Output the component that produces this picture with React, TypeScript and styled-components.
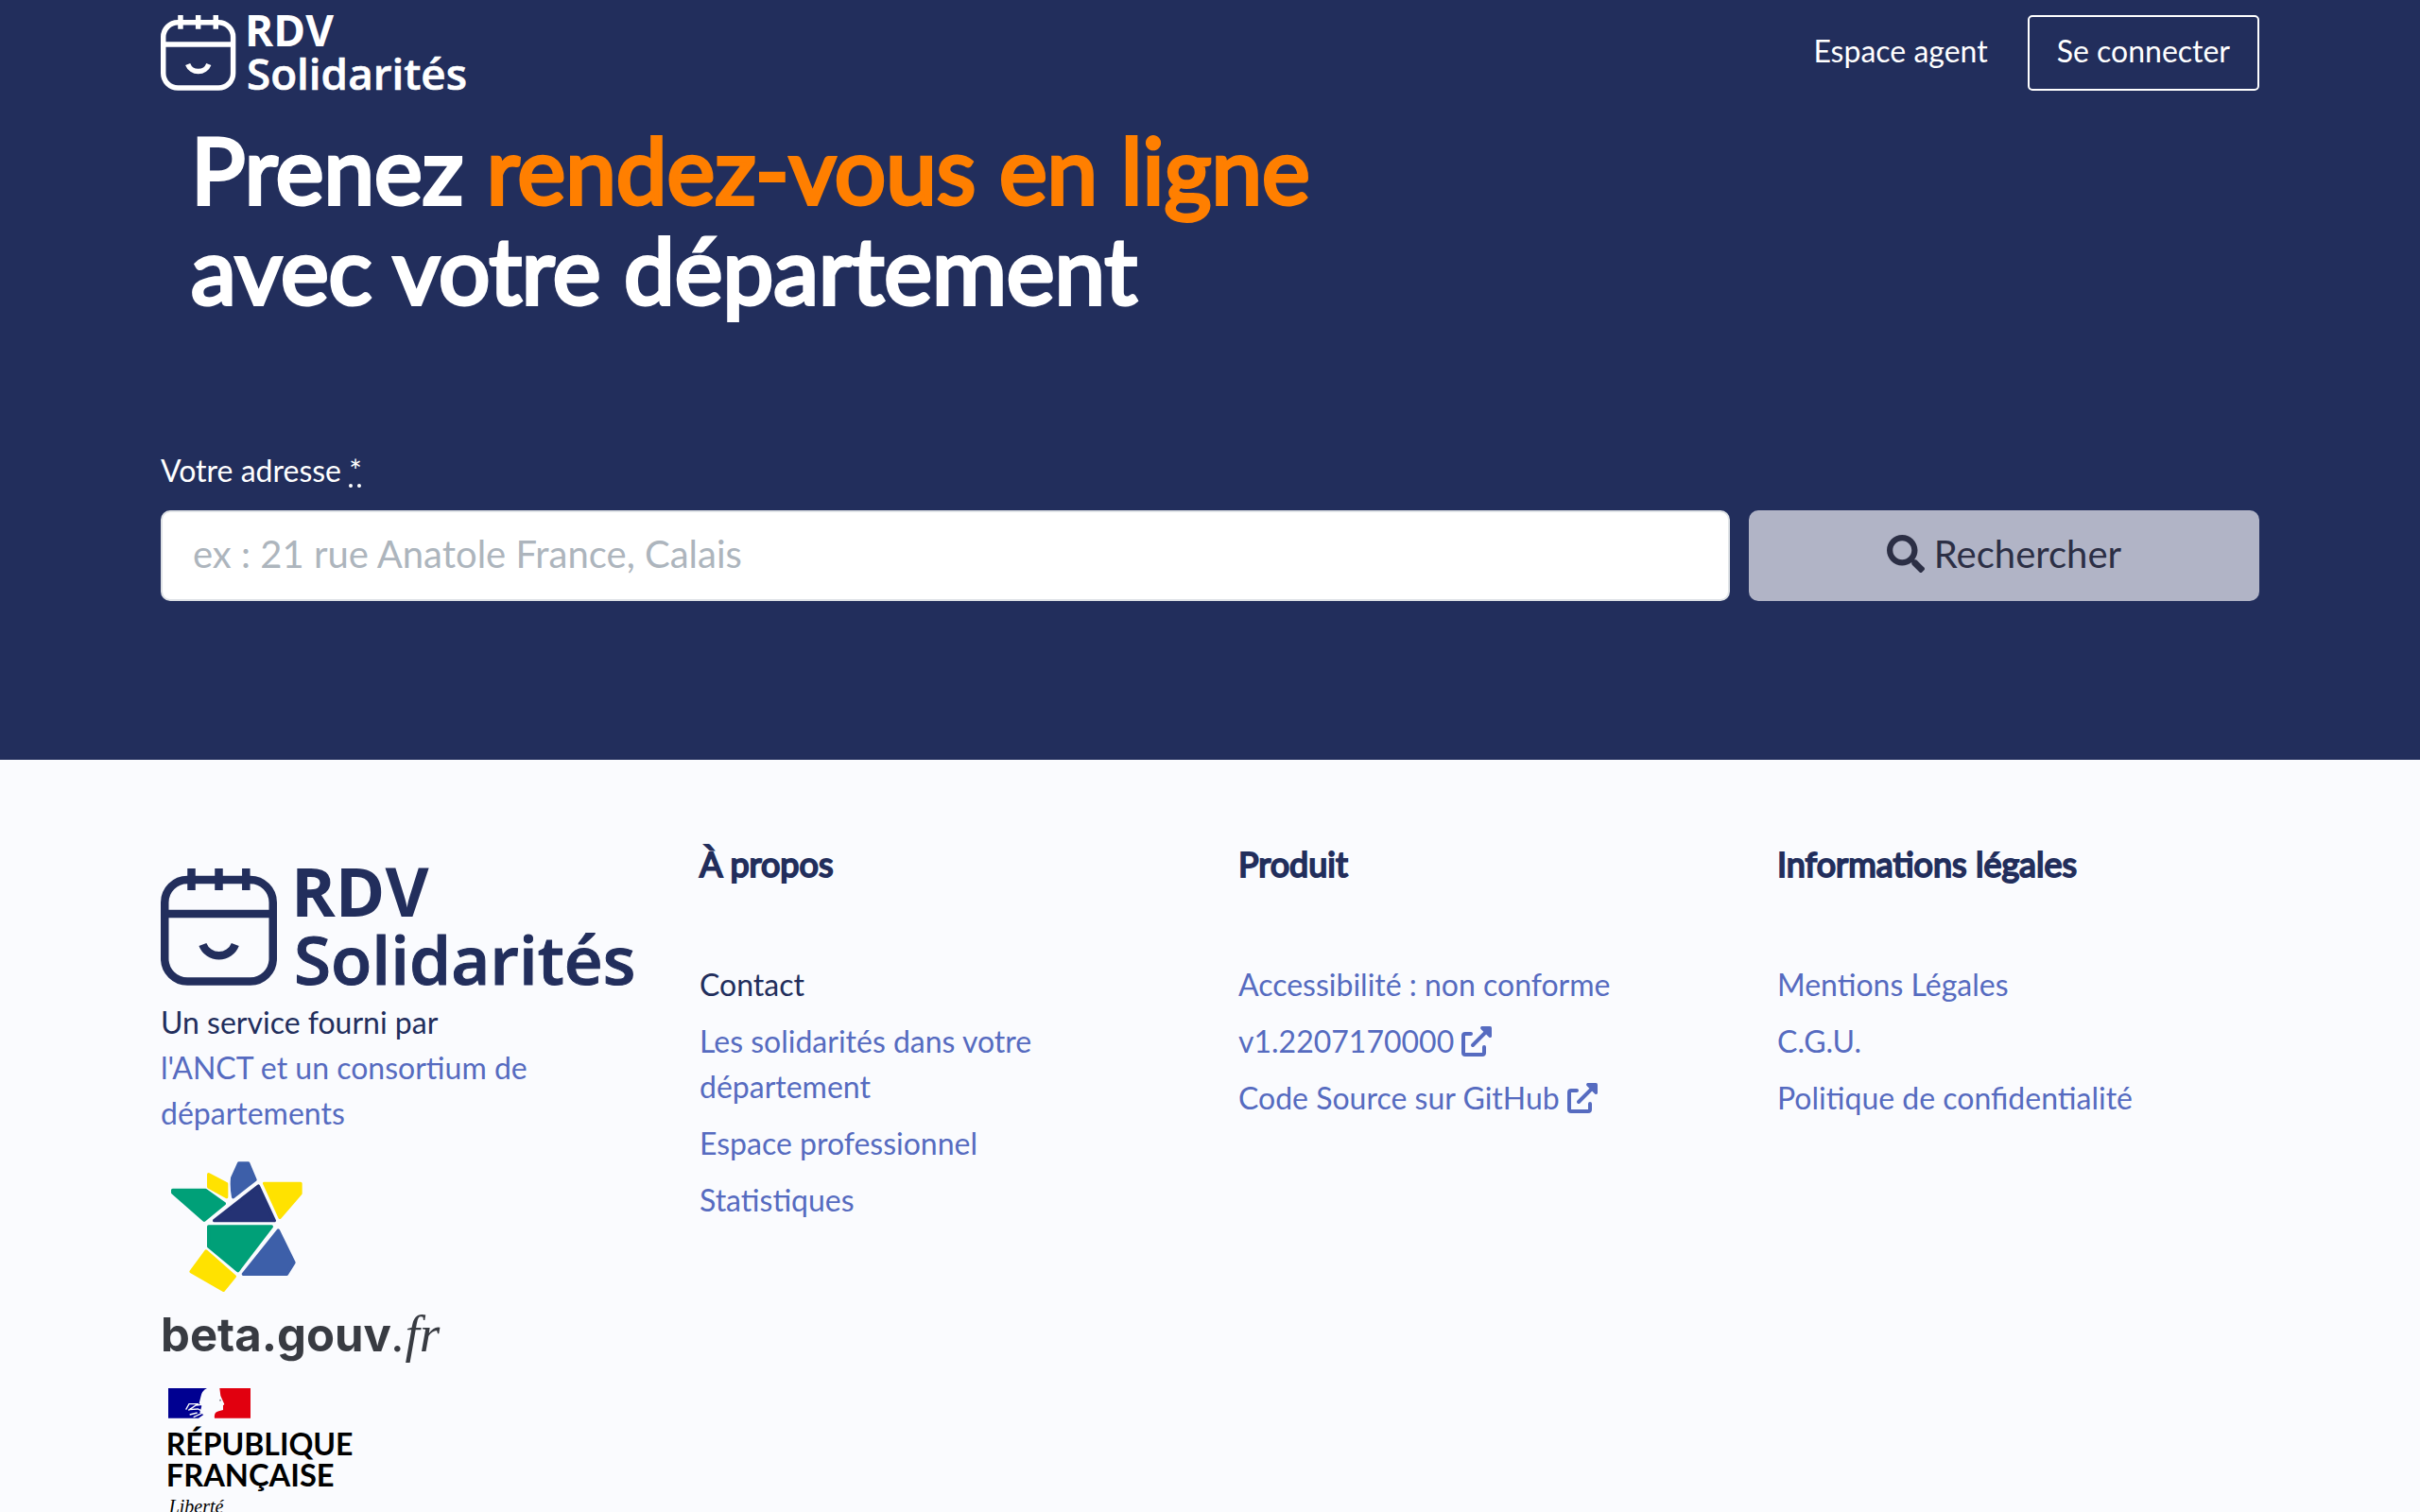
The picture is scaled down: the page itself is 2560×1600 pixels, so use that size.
import React from "react";
import styled, { createGlobalStyle } from "styled-components";
import { FaSearch } from "react-icons/fa";

const navy = "#222e5c";
const link = "#566bc0";

const GlobalStyle = createGlobalStyle`
  *, *::before, *::after { box-sizing: border-box; }
  body {
    margin: 0;
    background: #fafbfe;
    color: ${navy};
    font-family: Lato, "Liberation Sans", sans-serif;
    font-size: 32px;
    line-height: 48px;
  }
  a { color: ${link}; text-decoration: none; }
`;

const Container = styled.div`
  width: 100%;
  max-width: 2280px;
  margin: 0 auto;
  padding: 0 30px;
`;

const Hero = styled.div`
  background: ${navy};
  color: #fff;
  padding-bottom: 168px;
`;

const Navbar = styled.nav`
  display: flex;
  align-items: center;
  justify-content: space-between;
  padding: 16px 0;
`;

const NavLinks = styled.div`
  display: flex;
  align-items: center;
  gap: 42px;
`;

const NavLink = styled.a`
  color: #fff;
  padding-bottom: 4px;
`;

const OutlineLink = styled.a`
  height: 80px;
  padding: 12px 29px;
  border: 2px solid #fff;
  border-radius: 5px;
  color: #fff;
`;

const Title = styled.h1`
  margin: 0;
  padding: 14px 32px 136px;
  font-size: 96px;
  line-height: 106px;
  font-weight: 400;
  -webkit-text-stroke: 4px currentColor;
`;

const Accent = styled.span`
  color: #ff7f00;
`;

const SearchForm = styled.form`
  display: grid;
  grid-template-columns: minmax(0, 83fr) minmax(0, 27fr);
  column-gap: 20px;
  row-gap: 18px;
`;

const Label = styled.label`
  grid-column: 1 / -1;
`;

const Required = styled.abbr`
  text-decoration: underline dotted 4px;
`;

const AddressInput = styled.input`
  height: 96px;
  min-width: 0;
  padding: 0 32px 4px;
  border: 2px solid #dee2e6;
  border-radius: 10px;
  background: #fff;
  color: #6c757d;
  font: inherit;
  font-size: 40px;
  &::placeholder { color: #adb5bd; opacity: 1; }
`;

const SearchButton = styled.button`
  display: flex;
  align-items: center;
  justify-content: center;
  gap: 10px;
  height: 96px;
  padding: 0 0 4px;
  border: 0;
  border-radius: 10px;
  background: #b1b4c6;
  color: #2c2f45;
  font: inherit;
  font-size: 40px;
`;

const FooterGrid = styled.div`
  display: grid;
  grid-template-columns: repeat(4, minmax(0, 1fr));
  column-gap: 60px;
  padding-top: 90px;
`;

const Brand = styled.div`
  padding-top: 25px;
`;

const FooterTitle = styled.h2`
  margin: 0 0 84px;
  font-size: 36px;
  line-height: 40px;
  font-weight: 400;
  -webkit-text-stroke: 2px currentColor;
`;

const LinkList = styled.ul`
  display: flex;
  flex-direction: column;
  gap: 12px;
  margin: 0;
  padding: 0;
  list-style: none;
`;

const PlainLink = styled.a`
  color: ${navy};
`;

const ExternalSvg = styled.svg`
  width: 32px;
  height: 32px;
  vertical-align: -4px;
`;

const LogoSvg = styled.svg<{ $height: number }>`
  display: block;
  height: ${(p) => p.$height}px;
  overflow: visible;
`;

const Credit = styled.p`
  margin: 15px 0 25px;
`;

const PartnerSvg = styled.svg`
  display: block;
  overflow: visible;
`;

function ExternalIcon() {
  return (
    <ExternalSvg viewBox="0 0 96 96" aria-hidden="true">
      <g fill="none" stroke={link} strokeWidth="12" strokeLinecap="round" strokeLinejoin="round">
        <path d="M30 24H12Q6 24 6 30V84Q6 90 12 90H66Q72 90 72 84V66" />
        <path d="M36 60L76 20" />
      </g>
      <path fill={link} d="M64 0H91Q96 0 96 5V32Q94 38 88 35L61 8Q58 2 64 0Z" />
    </ExternalSvg>
  );
}

function Logo({ height, color }: { height: number; color: string }) {
  return (
    <LogoSvg $height={height} viewBox="0 0 502 124" role="img" aria-label="RDV Solidarités">
      <g fill="none" stroke={color} strokeWidth="8.5">
        <rect x="4.25" y="12" width="114.5" height="107.5" rx="24" />
        <path d="M4 48H119M32.5 0V23M61.5 0V23M90.3 0V23" />
        <path d="M44.4 80.5A18.4 18.4 0 0 0 78.8 80.5" />
      </g>
      <g fill={color} fontFamily="'Open Sans', sans-serif" fontSize="71">
        <text x="138" y="51" fontWeight="700">RDV</text>
        <text x="141" y="123" fontWeight="600" stroke={color} strokeWidth="1">Solidarités</text>
      </g>
    </LogoSvg>
  );
}

function BetaGouv() {
  return (
    <PartnerSvg width="300" height="214" viewBox="30 50 900 642" role="img" aria-label="beta.gouv.fr">
      <g strokeWidth="10" strokeLinejoin="round">
        <path fill="#3d5fa9" stroke="#3d5fa9" d="M278 62H308L330 114L260 169Q254 140 257 108Z" />
        <path fill="#ffe200" stroke="#ffe200" d="M182 97L239 127V169L182 137Z" />
        <path fill="#ffe200" stroke="#ffe200" d="M359 126H474V158L408 234Z" />
        <path fill="#00a078" stroke="#00a078" d="M68 147H172L232 190L168 243L68 155Z" />
        <path fill="#243274" stroke="#243274" d="M200 244L340 134L391 244Z" />
        <path fill="#00a078" stroke="#00a078" d="M182 263H382L275 403L182 326Z" />
        <path fill="#3d5fa9" stroke="#3d5fa9" d="M292 414L403 275L453 377L430 414Z" />
        <path fill="#ffe200" stroke="#ffe200" d="M174 341L265 421L229 465L126 406Z" />
      </g>
      <g fill="#383b42">
        <text x="30" y="660" fontFamily="Inter, sans-serif" fontWeight="700" fontSize="147">beta.gouv</text>
        <text x="764" y="660" fontFamily="'Liberation Serif', serif" fontStyle="italic" fontSize="166">.fr</text>
      </g>
    </PartnerSvg>
  );
}

function Republique() {
  return (
    <PartnerSvg width="300" height="160" viewBox="30 0 900 480" role="img" aria-label="République Française">
      <path fill="#000091" d="M54 84H177Q160 92 157 112L152 132L160 140L154 162L166 168L150 179H54Z" />
      <path fill="#e1000f" d="M217 84H315V179H201Q198 160 214 157L228 153V139L232 135L224 117L220 108Z" />
      <path fill="none" stroke="#fafbfe" strokeWidth="4" d="M110 152L120 134H150M118 154L142 138L162 136M120 152L148 150L164 158M122 168L146 162M134 176L160 164" />
      <circle cx="219" cy="122" r="3" fill="#8a8a94" />
      <g fontFamily="Lato, sans-serif" fontWeight="700">
        <text x="47" y="296" fontSize="96">RÉPUBLIQUE</text>
        <text x="47" y="395" fontSize="98">FRANÇAISE</text>
      </g>
      <text x="56" y="480" fontFamily="'Liberation Serif', serif" fontStyle="italic" fontSize="60">Liberté</text>
    </PartnerSvg>
  );
}

interface Item { text: string; plain?: boolean; external?: boolean }

const columns: { title: string; items: Item[] }[] = [
  {
    title: "À propos",
    items: [
      { text: "Contact", plain: true },
      { text: "Les solidarités dans votre département" },
      { text: "Espace professionnel" },
      { text: "Statistiques" },
    ],
  },
  {
    title: "Produit",
    items: [
      { text: "Accessibilité : non conforme" },
      { text: "v1.2207170000", external: true },
      { text: "Code Source sur GitHub", external: true },
    ],
  },
  {
    title: "Informations légales",
    items: [
      { text: "Mentions Légales" },
      { text: "C.G.U." },
      { text: "Politique de confidentialité" },
    ],
  },
];

export default function App() {
  return (
    <>
      <GlobalStyle />
      <Hero>
        <Container>
          <Navbar>
            <a href="#accueil"><Logo height={80} color="#fff" /></a>
            <NavLinks>
              <NavLink href="#agent">Espace agent</NavLink>
              <OutlineLink href="#connexion">Se connecter</OutlineLink>
            </NavLinks>
          </Navbar>
          <Title>
            Prenez <Accent>rendez-vous en ligne</Accent>
            <br />
            avec votre département
          </Title>
          <SearchForm>
            <Label htmlFor="adresse">
              Votre adresse <Required title="obligatoire">*</Required>
            </Label>
            <AddressInput id="adresse" type="text" placeholder="ex : 21 rue Anatole France, Calais" />
            <SearchButton type="submit">
              <FaSearch />
              Rechercher
            </SearchButton>
          </SearchForm>
        </Container>
      </Hero>
      <footer>
        <Container>
          <FooterGrid>
            <Brand>
              <Logo height={124} color={navy} />
              <Credit>
                Un service fourni par
                <br />
                <a href="#anct">l'ANCT et un consortium de départements</a>
              </Credit>
              <BetaGouv />
              <Republique />
            </Brand>
            {columns.map((column) => (
              <section key={column.title}>
                <FooterTitle>{column.title}</FooterTitle>
                <LinkList>
                  {column.items.map((item) => (
                    <li key={item.text}>
                      {item.plain ? (
                        <PlainLink href="#contact">{item.text}</PlainLink>
                      ) : (
                        <a href="#lien">
                          {item.text}
                          {item.external && <> <ExternalIcon /></>}
                        </a>
                      )}
                    </li>
                  ))}
                </LinkList>
              </section>
            ))}
          </FooterGrid>
        </Container>
      </footer>
    </>
  );
}
